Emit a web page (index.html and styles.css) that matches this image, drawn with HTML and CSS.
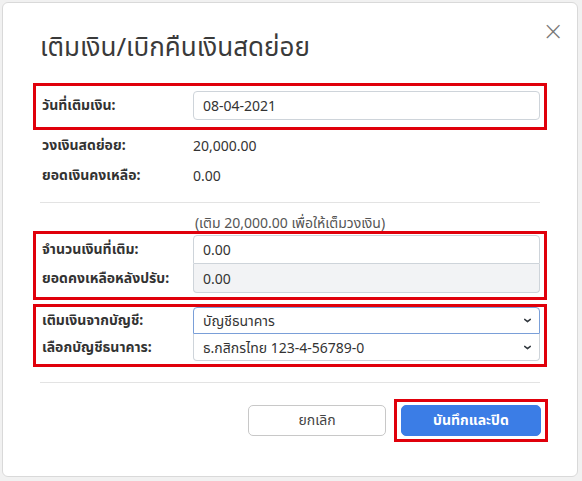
FILE: index.html
```html
<!DOCTYPE html>
<html lang="th">
<head>
  <meta charset="UTF-8" />
  <title>เติมเงิน/เบิกคืนเงินสดย่อย</title>
  <link rel="stylesheet" href="styles.css">
</head>
<body>
  <div class="modal">
    <div class="modal-header">
      <h2>เติมเงิน/เบิกคืนเงินสดย่อย</h2>
      <button class="close" type="button">&times;</button>
    </div>

    <div class="modal-body">
      <div class="mark">
        <div class="row">
          <label>วันที่เติมเงิน:</label>
          <input type="text" class="field" value="08-04-2021" />
        </div>
      </div>

      <div class="row plain">
        <label>วงเงินสดย่อย:</label>
        <span>20,000.00</span>
      </div>
      <div class="row plain">
        <label>ยอดเงินคงเหลือ:</label>
        <span>0.00</span>
      </div>

      <hr />

      <p class="note">(เติม 20,000.00 เพื่อให้เต็มวงเงิน)</p>

      <div class="mark mark-tight">
        <div class="row">
          <label>จำนวนเงินที่เติม:</label>
          <input type="text" class="field top" value="0.00" />
        </div>
        <div class="row">
          <label>ยอดคงเหลือหลังปรับ:</label>
          <input type="text" class="field bottom readonly" value="0.00" readonly />
        </div>
      </div>

      <div class="mark mark-select">
        <div class="row">
          <label>เติมเงินจากบัญชี:</label>
          <select class="field top focus">
            <option>บัญชีธนาคาร</option>
          </select>
        </div>
        <div class="row">
          <label>เลือกบัญชีธนาคาร:</label>
          <select class="field bottom">
            <option>ธ.กสิกรไทย 123-4-56789-0</option>
          </select>
        </div>
      </div>

      <hr class="foot-line" />

      <div class="modal-footer">
        <button class="btn btn-cancel" type="button">ยกเลิก</button>
        <div class="mark mark-btn">
          <button class="btn btn-save" type="button">บันทึกและปิด</button>
        </div>
      </div>
    </div>
  </div>
</body>
</html>
```

FILE: styles.css
```css
body {
  margin: 0;
  padding: 2px;
  background-color: #f1f1f1;
  font-family: "Noto Sans", "Noto Sans Thai", Tahoma, sans-serif;
  font-size: 14px;
  color: #333;
}

.modal {
  width: 576px;
  box-sizing: border-box;
  background: #fff;
  border: 1px solid #d9d9d9;
  border-radius: 6px;
  padding-bottom: 34px;
}

.modal-header {
  display: flex;
  justify-content: space-between;
  align-items: flex-start;
  padding: 0 13px 0 37px;
}

.modal-header h2 {
  margin: 27px 0 0 0;
  font-size: 26px;
  font-weight: 400;
  line-height: 32px;
  color: #3a3a3a;
}

.close {
  margin-top: 13px;
  border: none;
  background: none;
  font-size: 26px;
  line-height: 30px;
  padding: 0;
  color: #777;
  cursor: pointer;
  font-family: "DejaVu Sans", sans-serif;
  font-weight: 300;
}

.modal-body {
  padding: 21px 30px 0 30px;
}

/* red annotation boxes */
.mark {
  border: 3px solid #e0000b;
  padding: 5px 4px 7px 6px;
}

.mark-tight {
  padding: 1px 4px 4px 6px;
}

.mark-select {
  margin-top: 4px;
  padding: 0 4px 3px 6px;
}

.row {
  display: grid;
  grid-template-columns: 151px 1fr;
  align-items: center;
}

.row label {
  font-weight: bold;
}

.row.plain {
  height: 30px;
  padding-left: 9px;
}

.field {
  height: 29px;
  box-sizing: border-box;
  border: 1px solid #ced4da;
  border-radius: 4px;
  padding: 0 9px;
  font-family: inherit;
  font-size: 14px;
  color: #333;
  background: #fff;
  width: 100%;
}

.field.top {
  border-radius: 4px 4px 0 0;
}

.field.bottom {
  border-radius: 0 0 4px 4px;
  border-top: none;
}

.field.readonly {
  background: #f2f3f5;
}

select.field {
  appearance: none;
  padding-right: 28px;
  height: 27px;
  background-image: url("data:image/svg+xml,%3Csvg xmlns='http://www.w3.org/2000/svg' viewBox='0 0 16 16'%3E%3Cpath fill='none' stroke='%23343a40' stroke-linecap='round' stroke-linejoin='round' stroke-width='2.6' d='M3 6l5 4 5-4'/%3E%3C/svg%3E");
  background-repeat: no-repeat;
  background-position: right 7px center;
  background-size: 9px 9px;
}

select.field.focus {
  border-color: #7a9fd8;
}

hr {
  border: none;
  border-top: 1px solid #e3e3e3;
  margin: 12px 7px 0 7px;
}

.note {
  margin: 12px 0 0 0;
  height: 16px;
  line-height: 16px;
  text-align: center;
  color: #555;
}

.foot-line {
  margin-top: 15px;
}

.modal-footer {
  display: flex;
  justify-content: flex-end;
  align-items: center;
  gap: 8px;
  margin-top: 16px;
  margin-right: -1px;
}

.mark-btn {
  padding: 3px 4px;
}

.btn {
  height: 31px;
  width: 138px;
  border-radius: 5px;
  font-family: inherit;
  font-size: 14px;
  cursor: pointer;
}

.btn-cancel {
  background: #fff;
  border: 1px solid #c8c8c8;
  color: #444;
}

.btn-save {
  width: 140px;
  background: #3b7de6;
  border: 1px solid #3b7de6;
  color: #fff;
  font-weight: bold;
}
```
